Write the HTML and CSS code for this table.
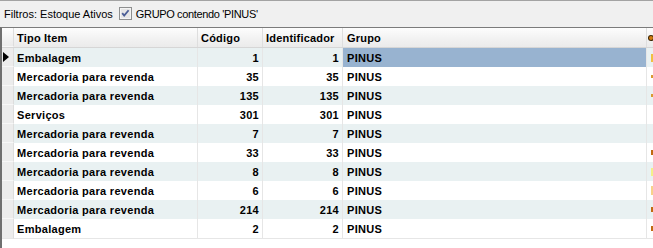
FILE: index.html
```html
<!DOCTYPE html>
<html lang="pt">
<head>
<meta charset="utf-8">
<link rel="stylesheet" href="styles.css">
</head>
<body>
<div class="filterbar">
  <span class="flabel">Filtros: Estoque Ativos</span>
  <span class="chk"><svg width="13" height="13" viewBox="0 0 13 13"><rect x="0.5" y="0.5" width="12" height="12" fill="#f4f4f4" stroke="#8e8f8f"/><rect x="2" y="2" width="9" height="9" fill="#e6e6e6"/><path d="M3.2 6.2 L5.2 8.6 L9.6 3.2" fill="none" stroke="#4a5d96" stroke-width="1.8"/></svg></span>
  <span class="flabel2">GRUPO contendo 'PINUS'</span>
</div>
<div class="grid">
  <div class="row head">
    <div class="ind"></div>
    <div class="c">Tipo Item</div>
    <div class="c">Código</div>
    <div class="c">Identificador</div>
    <div class="c">Grupo</div>
    <div class="c x"><span class="dot"></span></div>
  </div>
  <div class="row alt">
    <div class="ind"><span class="tri"></span></div>
    <div class="c">Embalagem</div>
    <div class="c n">1</div>
    <div class="c n">1</div>
    <div class="c sel">PINUS</div>
    <div class="c x"><span class="mk m1"></span></div>
  </div>
  <div class="row">
    <div class="ind"></div>
    <div class="c">Mercadoria para revenda</div>
    <div class="c n">35</div>
    <div class="c n">35</div>
    <div class="c">PINUS</div>
    <div class="c x"><span class="mk m2"></span></div>
  </div>
  <div class="row alt">
    <div class="ind"></div>
    <div class="c">Mercadoria para revenda</div>
    <div class="c n">135</div>
    <div class="c n">135</div>
    <div class="c">PINUS</div>
    <div class="c x"><span class="mk m2"></span></div>
  </div>
  <div class="row">
    <div class="ind"></div>
    <div class="c">Serviços</div>
    <div class="c n">301</div>
    <div class="c n">301</div>
    <div class="c">PINUS</div>
    <div class="c x"></div>
  </div>
  <div class="row alt">
    <div class="ind"></div>
    <div class="c">Mercadoria para revenda</div>
    <div class="c n">7</div>
    <div class="c n">7</div>
    <div class="c">PINUS</div>
    <div class="c x"></div>
  </div>
  <div class="row">
    <div class="ind"></div>
    <div class="c">Mercadoria para revenda</div>
    <div class="c n">33</div>
    <div class="c n">33</div>
    <div class="c">PINUS</div>
    <div class="c x"><span class="mk m3"></span></div>
  </div>
  <div class="row alt">
    <div class="ind"></div>
    <div class="c">Mercadoria para revenda</div>
    <div class="c n">8</div>
    <div class="c n">8</div>
    <div class="c">PINUS</div>
    <div class="c x"><span class="mk m4"></span></div>
  </div>
  <div class="row">
    <div class="ind"></div>
    <div class="c">Mercadoria para revenda</div>
    <div class="c n">6</div>
    <div class="c n">6</div>
    <div class="c">PINUS</div>
    <div class="c x"><span class="mk m5"></span></div>
  </div>
  <div class="row alt">
    <div class="ind"></div>
    <div class="c">Mercadoria para revenda</div>
    <div class="c n">214</div>
    <div class="c n">214</div>
    <div class="c">PINUS</div>
    <div class="c x"><span class="mk m3"></span></div>
  </div>
  <div class="row last">
    <div class="ind"></div>
    <div class="c">Embalagem</div>
    <div class="c n">2</div>
    <div class="c n">2</div>
    <div class="c">PINUS</div>
    <div class="c x"><span class="mk m3"></span></div>
  </div>
</div>
</body>
</html>
```
FILE: styles.css
```css
html, body {
  margin: 0;
  padding: 0;
  background: #ffffff;
}
body {
  width: 653px;
  height: 248px;
  overflow: hidden;
  font-family: "Liberation Sans", Arial, sans-serif;
  font-size: 11px;
  color: #000;
}
.filterbar {
  box-sizing: border-box;
  height: 27px;
  border-top: 1px solid #a3a3a3;
  background: #f0f0f0;
  display: flex;
  align-items: center;
  padding-left: 4px;
  padding-bottom: 1px;
}
.chk {
  display: flex;
  margin-left: 6px;
  margin-right: 4px;
}
.flabel2 {
  letter-spacing: -0.35px;
}
.grid {
  box-sizing: border-box;
  height: 221px;
  border-top: 1px solid #7b7b7b;
  border-left: 2px solid #6f6f6f;
}
.row {
  display: grid;
  grid-template-columns: 12px 184px 65px 80px 304px 1fr;
  height: 19px;
  font-weight: bold;
  letter-spacing: 0.3px;
}
.row .c {
  box-sizing: border-box;
  border-right: 1px solid #e6e6e6;
  padding: 0 3px 0 3px;
  display: flex;
  align-items: center;
  white-space: nowrap;
  overflow: hidden;
}
.row .c.n {
  justify-content: flex-end;
}
.row.alt .c {
  background: #e9f1f2;
}
.row .c.sel,
.row.alt .c.sel {
  background: #98b3d0;
  padding-left: 4px;
}
.row .c:nth-child(5) {
  padding-left: 4px;
}
.row.last .c,
.row.last .ind {
  border-bottom: 1px solid #e6e6e6;
}
.row.last {
  height: 20px;
}
.ind {
  box-sizing: border-box;
  background: #ececec;
  border-right: 1px solid #dddddd;
  border-bottom: 1px solid #f7f7f7;
  display: flex;
  align-items: center;
  padding-left: 1px;
}
.tri {
  width: 0;
  height: 0;
  border-left: 6px solid #000;
  border-top: 5px solid transparent;
  border-bottom: 5px solid transparent;
}
.head {
  background: linear-gradient(#fdfdfd, #f1f1f1 60%, #ebebeb);
  border-bottom: 1px solid #d6d6d6;
  letter-spacing: 0.2px;
}
.head .c {
  border-right: 1px solid #dedede;
}
.head .ind {
  background: transparent;
}
.row .c.x {
  border-right: none;
  padding: 0 0 0 4px;
}
.head .c.x {
  padding-left: 2px;
}
.dot {
  width: 4px;
  height: 4px;
  border-radius: 2px;
  background: #d07a10;
  box-shadow: 0 0 0 1px #3a2400;
}
.mk {
  width: 2px;
  height: 6px;
  background: #e08a1a;
}
.m1 { background: #f0c040; height: 8px; }
.m2 { background: #d99a30; height: 3px; }
.m3 { background: #c06a10; height: 5px; }
.m4 { background: #f3f08a; height: 8px; }
.m5 { background: #f7d28a; height: 9px; }
```
